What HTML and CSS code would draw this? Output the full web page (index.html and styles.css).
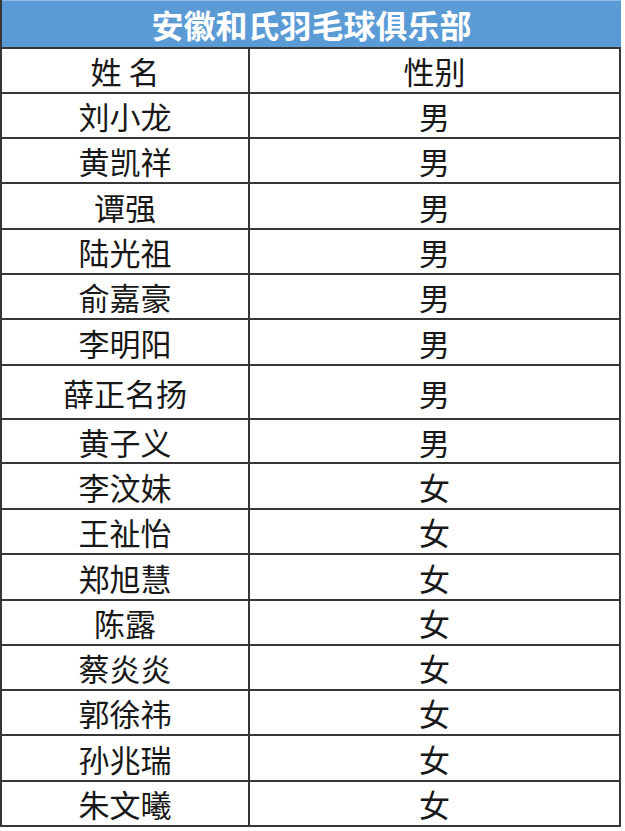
FILE: index.html
```html
<!DOCTYPE html>
<html lang="zh-CN">
<head>
<meta charset="utf-8">
<title>安徽和氏羽毛球俱乐部</title>
<link rel="stylesheet" href="styles.css">
</head>
<body>
<div class="sheet">
  <div class="title">安徽和氏羽毛球俱乐部</div>
  <div class="row h43"><div class="cell name">姓 名</div><div class="cell">性别</div></div>
  <div class="row h43"><div class="cell name">刘小龙</div><div class="cell">男</div></div>
  <div class="row h43"><div class="cell name">黄凯祥</div><div class="cell">男</div></div>
  <div class="row h44"><div class="cell name">谭强</div><div class="cell">男</div></div>
  <div class="row h43"><div class="cell name">陆光祖</div><div class="cell">男</div></div>
  <div class="row h43"><div class="cell name">俞嘉豪</div><div class="cell">男</div></div>
  <div class="row h44"><div class="cell name">李明阳</div><div class="cell">男</div></div>
  <div class="row h52"><div class="cell name">薛正名扬</div><div class="cell">男</div></div>
  <div class="row h42"><div class="cell name">黄子义</div><div class="cell">男</div></div>
  <div class="row h44"><div class="cell name">李汶妹</div><div class="cell">女</div></div>
  <div class="row h43"><div class="cell name">王祉怡</div><div class="cell">女</div></div>
  <div class="row h44"><div class="cell name">郑旭慧</div><div class="cell">女</div></div>
  <div class="row h43"><div class="cell name">陈露</div><div class="cell">女</div></div>
  <div class="row h43"><div class="cell name">蔡炎炎</div><div class="cell">女</div></div>
  <div class="row h43"><div class="cell name">郭徐祎</div><div class="cell">女</div></div>
  <div class="row h44"><div class="cell name">孙兆瑞</div><div class="cell">女</div></div>
  <div class="row h43"><div class="cell name">朱文曦</div><div class="cell">女</div></div>
</div>
</body>
</html>
```
FILE: styles.css
```css
html, body {
  margin: 0;
  padding: 0;
  background: #ffffff;
}

.sheet {
  width: 619px;
  border-left: 2px solid #363636;
  font-family: "Noto Sans CJK SC", "Noto Sans", sans-serif;
  color: #181818;
}

.title {
  height: 47px;
  background: #5b9bd5;
  border-top: 1px solid #8dbbe6;
  box-sizing: border-box;
  color: #ffffff;
  font-weight: 700;
  font-size: 32px;
  line-height: 1;
  display: flex;
  align-items: center;
  justify-content: center;
}

.row {
  display: grid;
  grid-template-columns: 248px 1fr;
  border-top: 2px solid #363636;
  border-right: 2px solid #363636;
  width: 617px;
}

.row:last-child {
  border-bottom: 2px solid #363636;
}

.h42 { height: 42px; }
.h43 { height: 43px; }
.h44 { height: 44px; }
.h52 { height: 52px; }

.cell {
  display: flex;
  align-items: center;
  justify-content: center;
  font-size: 31px;
  line-height: 1;
  white-space: pre;
}

.name {
  border-right: 2px solid #363636;
}
```
